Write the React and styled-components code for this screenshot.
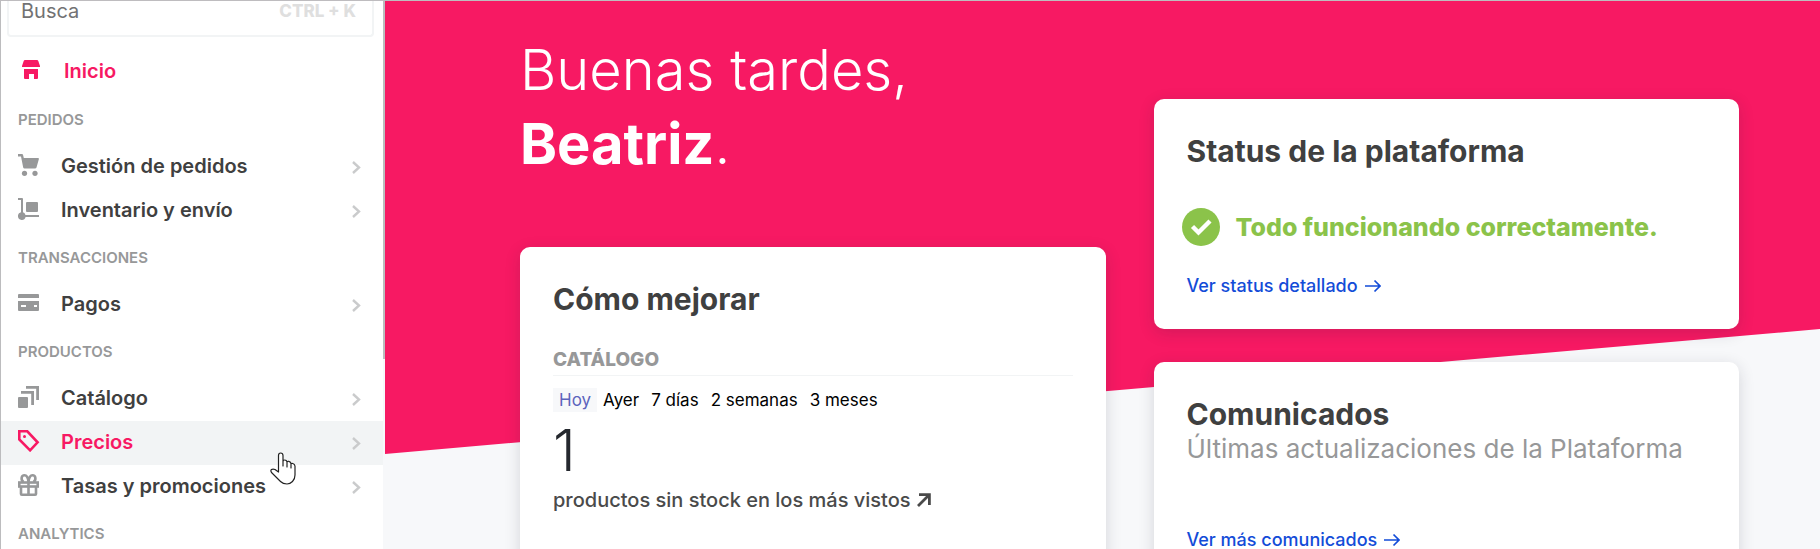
import React from "react";
import styled, { createGlobalStyle, css } from "styled-components";

const pink = "#f71963";
const sans = `Inter, "Open Sans", "Liberation Sans", sans-serif`;

const GlobalStyle = createGlobalStyle`
  *, *::before, *::after { box-sizing: border-box; }
  body { margin: 0; background: #f7f8fa; font-family: ${sans}; color: #3f4040; }
  button, input { font-family: inherit; }
`;

const Shell = styled.div`
  display: flex;
  height: 100vh;
  overflow: hidden;
  border-top: 1px solid rgba(60, 50, 55, 0.3);
  background-color: #f7f8fa;
`;

const Sidebar = styled.aside`
  display: flex;
  flex: 0 0 385px;
  min-width: 0;
  border-left: 1px solid #bcbcbe;
  background: #fff;
`;

const SidebarBody = styled.div`
  flex: 1;
  min-width: 0;
`;

const ScrollTrack = styled.div`
  flex: 0 0 2px;
  background: #f7f8fa;
`;

const ScrollThumb = styled.div`
  height: 358px;
  max-height: 100%;
  background: #bcbcbe;
`;

const SearchBox = styled.label`
  display: flex;
  align-items: flex-start;
  height: 36px;
  margin: 0 9px 14px 6px;
  padding: 0 16px 0 12px;
  border: 2px solid #f2f4f5;
  border-top: 0;
  border-radius: 0 0 4px 4px;
`;

const SearchInput = styled.input`
  flex: 1;
  width: 0;
  min-width: 0;
  height: 20px;
  padding: 0;
  border: 0;
  outline: 0;
  background: none;
  font-size: 20px;
  line-height: 20px;
  color: #3f4040;
  &::placeholder { color: #727273; opacity: 1; }
`;

const Shortcut = styled.kbd`
  font-family: inherit;
  font-size: 17px;
  font-weight: 800;
  line-height: 20px;
  color: #dfdfdf;
`;

const SectionTitle = styled.h2`
  margin: 0;
  padding: 15px 17px;
  font-size: 15px;
  font-weight: 600;
  line-height: 20px;
  text-transform: uppercase;
  color: #979899;
`;

const NavLink = styled.a`
  display: flex;
  align-items: flex-start;
  gap: 21px;
  height: 44px;
  padding: 9px 22px 0 17px;
  font-size: 20px;
  font-weight: 600;
  line-height: 24px;
  text-decoration: none;
  color: ${(p) => (p.$active ? pink : "#3f4040")};
  background: ${(p) => (p.$hover ? "#f2f4f5" : "transparent")};
  ${(p) => p.$home && css`padding-top: 8px; padding-left: 21px; gap: 24px;`}
  > svg { flex: none; color: ${(p) => (p.$active ? pink : "#979899")}; }
`;

const NavLabel = styled.span`
  flex: 1;
`;

const Chevron = styled.svg`
  margin-top: 7px;
  && { color: #cacbcc; }
`;

const Main = styled.main`
  flex: 1;
  min-width: 0;
  display: grid;
  grid-template-columns: minmax(0, 1fr);
  align-items: start;
  overflow: hidden;
`;

const HeroBackdrop = styled.div`
  grid-area: 1 / 1;
  height: 453px;
  background: ${pink};
  clip-path: polygon(0 0, 100% 0, 100% 328px, 0 453px);
`;

const Content = styled.div`
  grid-area: 1 / 1;
  display: grid;
  grid-template-columns: minmax(0, 1fr) minmax(0, 1fr);
  gap: 48px;
  padding: 0 81px 0 135px;
  position: relative;
`;

const Column = styled.div`
  display: flex;
  flex-direction: column;
  gap: 33px;
  padding-top: ${(p) => p.$top}px;
`;

const Greeting = styled.h1`
  margin: 0 0 33px;
  font-size: 56px;
  font-weight: 300;
  line-height: 74px;
  color: #fff;
  strong { font-weight: 700; }
`;

const Card = styled.section`
  padding: 34px 33px 31px;
  border-radius: 10px;
  background: #fff;
  box-shadow: 0 4px 16px rgba(30, 30, 50, 0.16);
  min-height: ${(p) => p.$min || 0}px;
`;

const CardTitle = styled.h2`
  margin: 0;
  font-size: 30px;
  font-weight: 700;
  line-height: 36px;
`;

const Subtitle = styled.p`
  margin: 1px 0 0;
  font-size: 26px;
  line-height: 32px;
  white-space: nowrap;
  color: #979899;
`;

const GroupTitle = styled.h3`
  margin: 31px 0 12px;
  padding-bottom: 3px;
  border-bottom: 1px solid #f2f4f5;
  font-size: 19px;
  font-weight: 800;
  line-height: 24px;
  text-transform: uppercase;
  color: #979899;
`;

const Ranges = styled.div`
  display: flex;
`;

const RangeButton = styled.button`
  height: 24px;
  padding: 0 6px;
  border: 0;
  font-size: 17px;
  line-height: 24px;
  color: ${(p) => (p.$active ? "#5c64bd" : "#000")};
  background: ${(p) => (p.$active ? "#f7f8fa" : "transparent")};
`;

const Figure = styled.p`
  margin: 6px 0;
  font-size: 58px;
  font-weight: 300;
  line-height: 64px;
  color: #25282e;
`;

const MetricLink = styled.a`
  display: flex;
  align-items: center;
  gap: 6px;
  font-size: 20px;
  font-weight: 500;
  line-height: 24px;
  text-decoration: none;
  color: #4a4a4a;
`;

const StatusRow = styled.p`
  display: flex;
  align-items: center;
  gap: 16px;
  margin: 39px 0 28px -5px;
  font-size: 25px;
  font-weight: 800;
  line-height: 32px;
  white-space: nowrap;
  color: #8bc34a;
  svg { flex: none; }
`;

const DetailLink = styled.a`
  display: flex;
  align-items: center;
  gap: 7px;
  margin-top: ${(p) => p.$top || 0}px;
  font-size: 18px;
  font-weight: 500;
  line-height: 24px;
  text-decoration: none;
  color: #134cd8;
`;

const Pointer = styled.svg`
  position: absolute;
  left: 270px;
  top: 452px;
  pointer-events: none;
`;

const icons = {
  home: (
    <svg width="18" height="22" viewBox="0 -1 18 22" fill="currentColor" aria-hidden="true">
      <path d="M3 0h12q1 0 1.300 1L18 6v1H0V6l1.700-5Q2 0 3 0zM2 9h14v9q0 1-1 1h-3v-5H7v5H3q-1 0-1-1z" />
    </svg>
  ),
  cart: (
    <svg width="22" height="22" viewBox="0 0 22 22" fill="currentColor" aria-hidden="true">
      <path d="M0 0h4q.8 0 1 .8L5.800 4H20q1.200 0 .9 1L18.500 13.500q-.3 1-1.500 1H6.500q-1 0-1.300-1L3 2.500H0z" />
      <circle cx="6.500" cy="19.300" r="2.600" />
      <circle cx="17" cy="19.300" r="2.600" />
    </svg>
  ),
  dolly: (
    <svg width="22" height="22" viewBox="0 0 22 22" fill="currentColor" aria-hidden="true">
      <path d="M0 0h4q1 0 1 1v13.300A3.900 3.900 0 0 1 7.500 17H21v2H7.600A3.900 3.900 0 1 1 3 14.200V2H0z" />
      <rect x="8" y="4" width="12" height="10" rx="1" />
    </svg>
  ),
  card: (
    <svg width="22" height="22" viewBox="0 -2 22 22" fill="currentColor" aria-hidden="true">
      <path d="M1 0h19q1 0 1 1v3H0V1q0-1 1-1z" />
      <path fillRule="evenodd" d="M0 7h21v9q0 1-1 1H1q-1 0-1-1zM3 11v2h5v-2zM16 11v2h3v-2z" />
    </svg>
  ),
  layers: (
    <svg width="22" height="22" viewBox="0 0 22 22" fill="none" stroke="currentColor" aria-hidden="true">
      <rect x="0" y="11" width="10" height="11" rx="1" fill="currentColor" stroke="none" />
      <path strokeWidth="2.800" d="M3 6.400h11.600V19M8 1.400h11.600V14" />
    </svg>
  ),
  tag: (
    <svg width="22" height="22" viewBox="0 0 22 22" fill="none" stroke="currentColor" aria-hidden="true">
      <path strokeWidth="2.600" d="M1.300 1.300h8L19.600 12.300l-7.500 8L1.300 9.500z" />
      <circle cx="6.500" cy="6.500" r="1.500" fill="currentColor" stroke="none" />
    </svg>
  ),
  gift: (
    <svg width="22" height="22" viewBox="0 0 22 22" fill="none" stroke="currentColor" strokeWidth="2.600" aria-hidden="true">
      <rect x="1.300" y="8.500" width="18.400" height="4" />
      <path d="M3 12.500V20q0 .7.800.7h13.400q.8 0 .8-.7v-7.500M10.500 8.500V21" />
      <path d="M10.500 8C10 3 8.500 1.300 6.500 1.300c-3.300 0-4 4.500-1 6.700M10.500 8c.5-5 2-6.700 4-6.700 3.300 0 4 4.500 1 6.700" />
    </svg>
  ),
};

const sections = [
  {
    title: "Pedidos",
    items: [
      { icon: "cart", label: "Gestión de pedidos" },
      { icon: "dolly", label: "Inventario y envío" },
    ],
  },
  { title: "Transacciones", items: [{ icon: "card", label: "Pagos" }] },
  {
    title: "Productos",
    items: [
      { icon: "layers", label: "Catálogo" },
      { icon: "tag", label: "Precios", active: true },
      { icon: "gift", label: "Tasas y promociones" },
    ],
  },
  { title: "Analytics", items: [] },
];

const ranges = ["Hoy", "Ayer", "7 días", "2 semanas", "3 meses"];

function ArrowRight() {
  return (
    <svg width="16" height="14" viewBox="0 0 16 14" fill="none" stroke="currentColor" strokeWidth="1.700" aria-hidden="true">
      <path d="M0 7h14.500M9.500 1.500 15 7l-5.500 5.500" />
    </svg>
  );
}

function NavItem({ item }) {
  return (
    <NavLink href="#" $active={item.active} $hover={item.active}>
      {icons[item.icon]}
      <NavLabel>{item.label}</NavLabel>
      <Chevron width="9" height="13" viewBox="0 0 9 13" fill="none" stroke="currentColor" strokeWidth="2.400" aria-hidden="true">
        <path d="M1 1l6 5.500L1 12" />
      </Chevron>
    </NavLink>
  );
}

export default function App() {
  return (
    <>
      <GlobalStyle />
      <Shell>
        <Sidebar>
          <SidebarBody>
            <SearchBox>
              <SearchInput type="search" placeholder="Busca" aria-label="Busca" />
              <Shortcut>CTRL + K</Shortcut>
            </SearchBox>
            <nav>
              <NavLink href="#" $active $home>
                {icons.home}
                <NavLabel>Inicio</NavLabel>
              </NavLink>
              {sections.map((section) => (
                <React.Fragment key={section.title}>
                  <SectionTitle>{section.title}</SectionTitle>
                  {section.items.map((item) => (
                    <NavItem key={item.label} item={item} />
                  ))}
                </React.Fragment>
              ))}
            </nav>
          </SidebarBody>
          <ScrollTrack>
            <ScrollThumb />
          </ScrollTrack>
        </Sidebar>
        <Main>
          <HeroBackdrop />
          <Content>
            <Column $top={32}>
              <Greeting>
                Buenas tardes,
                <br />
                <strong>Beatriz</strong>.
              </Greeting>
              <Card $min={360}>
                <CardTitle>Cómo mejorar</CardTitle>
                <GroupTitle>Catálogo</GroupTitle>
                <Ranges>
                  {ranges.map((label, i) => (
                    <RangeButton key={label} type="button" $active={i === 0}>
                      {label}
                    </RangeButton>
                  ))}
                </Ranges>
                <Figure>1</Figure>
                <MetricLink href="#">
                  productos sin stock en los más vistos
                  <svg width="14" height="14" viewBox="0 0 14 14" fill="none" stroke="currentColor" strokeWidth="2.800" aria-hidden="true">
                    <path d="M1 13 12 2M2 1.700h10.400V12" />
                  </svg>
                </MetricLink>
              </Card>
            </Column>
            <Column $top={98}>
              <Card>
                <CardTitle>Status de la plataforma</CardTitle>
                <StatusRow>
                  <svg width="38" height="38" viewBox="0 0 38 38" aria-hidden="true">
                    <circle cx="19" cy="19" r="19" fill="currentColor" />
                    <path d="M10.500 18.500l6 6L28 13" fill="none" stroke="#fff" strokeWidth="4.400" />
                  </svg>
                  Todo funcionando correctamente.
                </StatusRow>
                <DetailLink href="#">
                  Ver status detallado
                  <ArrowRight />
                </DetailLink>
              </Card>
              <Card $min={240}>
                <CardTitle>Comunicados</CardTitle>
                <Subtitle>Últimas actualizaciones de la Plataforma</Subtitle>
                <DetailLink href="#" $top={63}>
                  Ver más comunicados
                  <ArrowRight />
                </DetailLink>
              </Card>
            </Column>
          </Content>
        </Main>
      </Shell>
      <Pointer width="26" height="33" viewBox="0 0 26 33" aria-hidden="true">
        <path
          d="M8.500 20V3.500Q8.500 1 10.700 1T13 3.500V14V9.500Q13 8 14.800 8T17 10v5V10.500Q17 9 18.700 9.300T21 11.500V16V12.500Q21 11 22.800 11.500T25 14v9q0 4-2.500 6.500T17 32q-4 0-6.500-2.500L1.500 20.500Q.3 18.500 1.500 17.600T5 17.500z"
          fill="#fff"
          stroke="#222"
          strokeWidth="1.200"
          strokeLinejoin="round"
        />
      </Pointer>
    </>
  );
}
